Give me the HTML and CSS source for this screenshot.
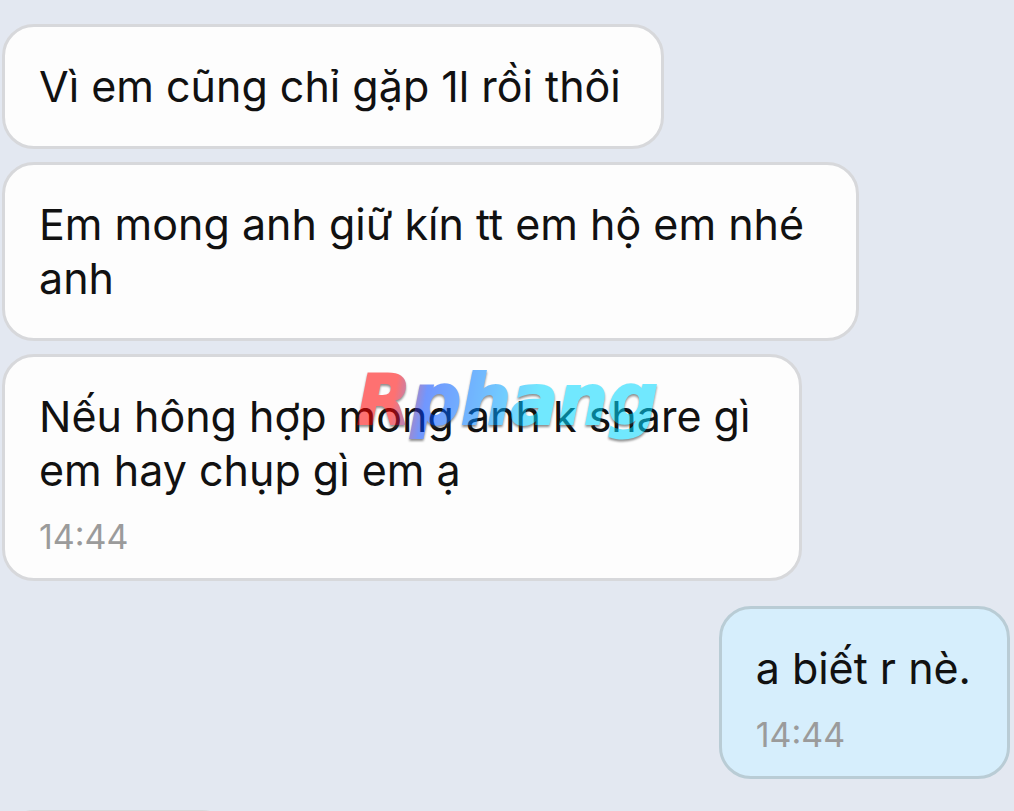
FILE: index.html
```html
<!DOCTYPE html>
<html lang="vi">
<head>
  <meta charset="UTF-8" />
  <meta name="viewport" content="width=device-width, initial-scale=1.0"/>
  <title>Tin nhắn</title>
  <link rel="stylesheet" href="styles.css">
</head>
<body>

  <main class="chat">
    <div class="message short">
      <p>Vì em cũng chỉ gặp 1l rồi thôi</p>
    </div>

    <div class="message wide">
      <p>Em mong anh giữ kín tt em hộ em nhé anh</p>
    </div>

    <div class="message medium">
      <p>Nếu hông hợp mong anh k share gì em hay chụp gì em ạ</p>
      <time>14:44</time>
      <span class="watermark">Rphang</span>
    </div>

    <div class="message own">
      <p>a biết r nè.</p>
      <time>14:44</time>
    </div>

    <!-- Next message, below the fold -->
    <div class="message next"></div>
  </main>

</body>
</html>
```

FILE: styles.css
```css
* { box-sizing: border-box; }
html { height: 100%; overflow: hidden; }
body { margin: 0; height: 100%; overflow: hidden; font-family: Inter, 'Liberation Sans', sans-serif; background-color: #e3e8f1; color: #111; }

.chat { display: flex; flex-direction: column; align-items: flex-start; gap: 13px; height: 100%; overflow: hidden; padding: 24px 4px 0 2px; }

.message { position: relative; flex-shrink: 0; padding: 32px 36px 33px 34px; border: 3px solid #d7d8db; border-radius: 32px; background-color: #fdfdfd; }
.message p { margin: 0; font-size: 43px; line-height: 54px; }
.message time { display: block; margin: 22px 0 -10px; font-size: 34px; line-height: 36px; color: #9b9b9b; }
.short { width: calc(66% - 3px); }
.wide { width: 85%; }
.medium { width: calc(80% - 6px); }
.own { align-self: flex-end; margin-top: 12px; background-color: #d6eefc; border-color: #b9ccd5; }
.next { width: 232px; margin-top: 18px; }

/* Watermark over the conversation */
.watermark { position: absolute; top: 0; left: 352px; font-family: 'DejaVu Sans', sans-serif; font-size: 70px; line-height: 86px; font-weight: bold; font-style: italic; color: transparent; -webkit-text-stroke: 2px transparent; background: linear-gradient(100deg, #ff0000 14%, #0044ff 24%, #0088ff 42%, #00d7ff 60%); -webkit-background-clip: text; background-clip: text; filter: drop-shadow(0 2px 1px #333); opacity: 0.55; pointer-events: none; }
```
